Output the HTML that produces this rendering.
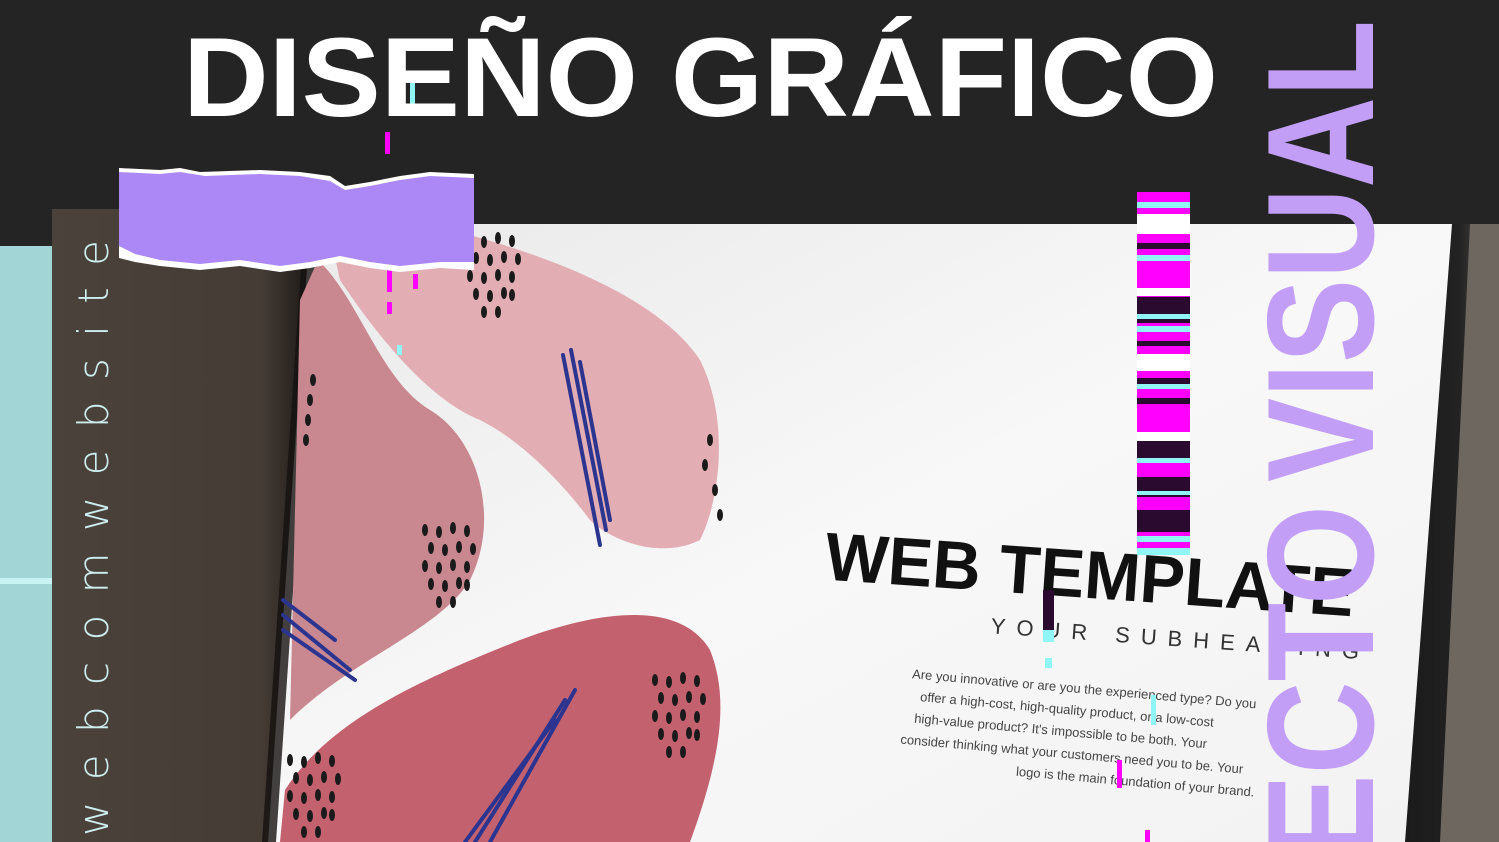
<!DOCTYPE html>
<html><head><meta charset="utf-8"><style>
html,body{margin:0;padding:0;background:#242424;overflow:hidden;}
svg{display:block}
</style></head><body>
<svg width="1499" height="842" viewBox="0 0 1499 842" xmlns="http://www.w3.org/2000/svg">
<defs>
<linearGradient id="brown" x1="0" x2="1" y1="0" y2="0">
<stop offset="0" stop-color="#4b423b"/><stop offset="0.8" stop-color="#453c35"/><stop offset="1" stop-color="#1a1614"/>
</linearGradient>
<linearGradient id="frame" x1="0" x2="1" y1="0" y2="0">
<stop offset="0" stop-color="#1a1a1a"/><stop offset="0.6" stop-color="#222"/><stop offset="1" stop-color="#5e5650"/>
</linearGradient>
<linearGradient id="paper" x1="0" x2="1" y1="0" y2="1">
<stop offset="0" stop-color="#e9e9e9"/><stop offset="0.5" stop-color="#f8f8f8"/><stop offset="1" stop-color="#f2f2f2"/>
</linearGradient>
<g id="d1">
<ellipse cx="0" cy="0" rx="3" ry="6"/><ellipse cx="14" cy="2" rx="3" ry="6"/><ellipse cx="28" cy="-2" rx="3" ry="6"/><ellipse cx="42" cy="1" rx="3" ry="6"/>
<ellipse cx="6" cy="18" rx="3" ry="6"/><ellipse cx="20" cy="20" rx="3" ry="6"/><ellipse cx="34" cy="17" rx="3" ry="6"/><ellipse cx="48" cy="19" rx="3" ry="6"/>
<ellipse cx="0" cy="36" rx="3" ry="6"/><ellipse cx="14" cy="38" rx="3" ry="6"/><ellipse cx="28" cy="35" rx="3" ry="6"/><ellipse cx="42" cy="37" rx="3" ry="6"/>
<ellipse cx="6" cy="54" rx="3" ry="6"/><ellipse cx="20" cy="56" rx="3" ry="6"/><ellipse cx="34" cy="53" rx="3" ry="6"/>
<ellipse cx="14" cy="72" rx="3" ry="6"/><ellipse cx="28" cy="72" rx="3" ry="6"/><ellipse cx="42" cy="55" rx="3" ry="6"/>
</g>
</defs>
<rect width="1499" height="842" fill="#242424"/>
<polygon points="1440,224 1499,224 1499,842 1400,842" fill="url(#frame)"/>
<polygon points="1470,224 1499,224 1499,842 1440,842" fill="#6e6760"/>
<rect x="0" y="246" width="52" height="596" fill="#a2d6d6"/>
<rect x="0" y="578" width="52" height="6" fill="#c9f2f2"/>
<rect x="52" y="209" width="262" height="633" fill="url(#brown)"/>
<polygon points="310,224 1452,224 1405,842 268,842" fill="url(#paper)"/>
<polygon points="304,224 318,224 276,842 262,842" fill="#151210" opacity="0.8"/>
<path d="M318,260 C360,300 380,380 430,410 C480,440 500,520 470,580 C440,630 350,660 290,720 L300,300 Z" fill="#c98790"/>
<path d="M330,235 L470,235 C560,260 660,300 700,360 C730,420 720,500 700,540 C660,560 610,540 590,520 C560,480 520,440 480,420 C430,400 380,340 340,280 Z" fill="#e2adb3"/>
<path d="M280,842 L285,790 C330,720 420,680 520,640 C600,610 680,600 710,650 C730,700 720,760 690,842 Z" fill="#c4616f"/>
<g stroke="#2b3590" stroke-width="4" stroke-linecap="round" fill="none">
<line x1="563" y1="355" x2="600" y2="545"/><line x1="571" y1="350" x2="606" y2="530"/><line x1="580" y1="362" x2="610" y2="520"/>
<line x1="283" y1="600" x2="335" y2="640"/><line x1="283" y1="615" x2="350" y2="670"/><line x1="283" y1="630" x2="355" y2="680"/>
<line x1="575" y1="690" x2="490" y2="842"/><line x1="565" y1="700" x2="475" y2="842"/><line x1="555" y1="720" x2="465" y2="842"/>
</g>
<g fill="#1a1a1a">
<use href="#d1" x="470" y="240"/>
<use href="#d1" x="425" y="530"/>
<use href="#d1" x="655" y="680"/>
<use href="#d1" x="290" y="760"/>
<ellipse cx="710" cy="440" rx="3" ry="6"/><ellipse cx="705" cy="465" rx="3" ry="6"/><ellipse cx="715" cy="490" rx="3" ry="6"/><ellipse cx="720" cy="515" rx="3" ry="6"/>
<ellipse cx="313" cy="380" rx="3" ry="6"/><ellipse cx="310" cy="400" rx="3" ry="6"/><ellipse cx="308" cy="420" rx="3" ry="6"/><ellipse cx="306" cy="440" rx="3" ry="6"/>
</g>
<g transform="rotate(4 1090 570)" font-family="Liberation Sans, sans-serif">
<text x="825" y="598" font-size="68" font-weight="bold" fill="#111" textLength="530" lengthAdjust="spacingAndGlyphs">WEB TEMPLATE</text>
<text x="995" y="640" font-size="22" fill="#333" letter-spacing="11">YOUR SUBHEADING</text>
</g>
<g transform="rotate(5 1090 730)" font-family="Liberation Sans, sans-serif" font-size="13" fill="#444">
<text x="908" y="694">Are you innovative or are you the experienced type? Do you</text>
<text x="918" y="716">offer a high-cost, high-quality product, or a low-cost</text>
<text x="914" y="738">high-value product? It's impossible to be both. Your</text>
<text x="902" y="760">consider thinking what your customers need you to be. Your</text>
<text x="1020" y="782">logo is the main foundation of your brand.</text>
</g>
<g font-family="Liberation Sans, sans-serif" font-weight="bold" font-size="152" fill="#c29ef6">
<text transform="translate(1373,20) rotate(-90)" text-anchor="end" textLength="462" lengthAdjust="spacingAndGlyphs">VISUAL</text>
<text transform="translate(1373,505) rotate(-90)" text-anchor="end" textLength="720" lengthAdjust="spacingAndGlyphs">PROYECTO</text>
</g>
<g>
<rect x="1137" y="192" width="53" height="363" fill="#ff00ff"/>
<rect x="1137" y="202" width="53" height="6" fill="#8ff5f5"/>
<rect x="1137" y="214" width="53" height="20" fill="#ffffff"/>
<rect x="1137" y="243" width="53" height="6" fill="#2a0a2e"/>
<rect x="1137" y="255" width="53" height="6" fill="#8ff5f5"/>
<rect x="1137" y="288" width="53" height="8" fill="#ffffff"/>
<rect x="1137" y="297" width="53" height="26" fill="#2a0a2e"/>
<rect x="1137" y="314" width="53" height="5" fill="#8ff5f5"/>
<rect x="1137" y="326" width="53" height="6" fill="#8ff5f5"/>
<rect x="1137" y="341" width="53" height="5" fill="#2a0a2e"/>
<rect x="1137" y="354" width="53" height="17" fill="#ffffff"/>
<rect x="1137" y="378" width="53" height="6" fill="#2a0a2e"/>
<rect x="1137" y="384" width="53" height="5" fill="#8ff5f5"/>
<rect x="1137" y="398" width="53" height="6" fill="#2a0a2e"/>
<rect x="1137" y="432" width="53" height="9" fill="#ffffff"/>
<rect x="1137" y="441" width="53" height="18" fill="#2a0a2e"/>
<rect x="1137" y="458" width="53" height="5" fill="#8ff5f5"/>
<rect x="1137" y="477" width="53" height="20" fill="#2a0a2e"/>
<rect x="1137" y="491" width="53" height="4" fill="#8ff5f5"/>
<rect x="1137" y="510" width="53" height="22" fill="#2a0a2e"/>
<rect x="1137" y="536" width="53" height="6" fill="#8ff5f5"/>
<rect x="1137" y="548" width="53" height="7" fill="#8ff5f5"/>
</g>
<rect x="1043" y="590" width="11" height="40" fill="#2a0a2e"/>
<rect x="1043" y="630" width="11" height="12" fill="#8ff5f5"/>
<rect x="1045" y="658" width="7" height="10" fill="#8ff5f5"/>
<rect x="1151" y="695" width="5" height="30" fill="#8ff5f5"/>
<rect x="1117" y="760" width="5" height="28" fill="#ff00ff"/>
<rect x="1145" y="830" width="5" height="12" fill="#ff00ff"/>
<rect x="385" y="132" width="5" height="22" fill="#ff00ff"/>
<rect x="406" y="190" width="5" height="22" fill="#ff00ff"/>
<rect x="387" y="240" width="5" height="52" fill="#ff00ff"/>
<rect x="413" y="274" width="5" height="15" fill="#ff00ff"/>
<rect x="387" y="302" width="5" height="12" fill="#ff00ff"/>
<rect x="397" y="345" width="5" height="10" fill="#8ff5f5"/>
<rect x="410" y="82" width="5" height="22" fill="#8ff5f5"/>
<path d="M119,168 L160,170 L180,168 L200,172 L260,170 L300,172 L330,176 L345,186 L370,182 L400,176 L430,172 L474,174 L474,270 L440,268 L400,272 L370,268 L340,262 L310,268 L280,272 L240,266 L200,270 L160,266 L135,262 L119,258 Z" fill="#ffffff"/>
<path d="M119,172 L160,174 L180,172 L205,176 L260,174 L300,176 L330,181 L345,190 L370,186 L400,180 L430,176 L474,178 L474,262 L440,262 L400,266 L370,262 L340,256 L310,262 L280,266 L240,260 L200,264 L160,260 L135,254 L119,246 Z" fill="#ac88f6"/>
<text transform="translate(108,836) rotate(-90)" font-family="DejaVu Sans, sans-serif" font-weight="200" font-size="42" fill="#cdeeee" textLength="596" lengthAdjust="spacing">webcomwebsite</text>
<text x="183" y="116" font-family="Liberation Sans, sans-serif" font-weight="bold" font-size="112" fill="#ffffff" textLength="1035" lengthAdjust="spacingAndGlyphs">DISEÑO GRÁFICO</text>
</svg>
</body></html>
